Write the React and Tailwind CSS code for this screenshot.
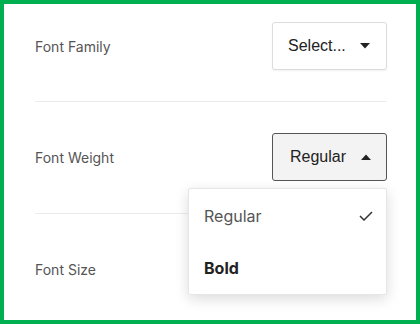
import { useState } from 'react';

const Caret = ({ up }) => (
  <svg width="10" height="6" viewBox="0 0 10 6" className="shrink-0">
    {up ? <path d="M0 6 L5 0.5 L10 6 Z" fill="#222" /> : <path d="M0 0 L5 5.5 L10 0 Z" fill="#222" />}
  </svg>
);

const Check = () => (
  <svg width="14" height="10" viewBox="0 0 14 10" fill="none">
    <path d="M1 5 L5 9 L13 1" stroke="#333" strokeWidth="1.5" />
  </svg>
);

const OPCOES = ['Regular', 'Bold'];

export default function App() {
  const [peso] = useState('Regular');

  return (
    <div className="w-[420px] h-[324px] overflow-hidden border-4 border-[#00b050] bg-white pl-[31px] pr-[29px] font-['Inter',sans-serif]">
      {/* Font Family */}
      <div className="flex items-center justify-between pt-[18px] pb-[31px] border-b border-[#ececec]">
        <span className="text-[14px] text-[#555]">Font Family</span>
        <button className="h-[48px] w-[115px] flex items-center justify-between pl-[15px] pr-[16px] bg-white border border-[#dcdcdc] rounded-[3px] shadow-[0_1px_2px_rgba(0,0,0,0.06)] text-[16px] text-[#222] font-['Liberation_Sans',Arial,sans-serif]">
          Select...
          <Caret />
        </button>
      </div>

      {/* Font Weight */}
      <div className="flex items-center justify-between pt-[31px] pb-[32px] border-b border-[#ececec]">
        <span className="text-[14px] text-[#555]">Font Weight</span>
        <div className="relative">
          <button className="h-[48px] w-[115px] flex items-center justify-between pl-[17px] pr-[15px] bg-[#f3f3f3] border-[1.5px] border-[#555] rounded-[3px] text-[16px] text-[#222] font-['Liberation_Sans',Arial,sans-serif]">
            {peso}
            <Caret up />
          </button>
          <div className="absolute right-0 top-[55px] w-[199px] z-10 bg-white border border-[#e6e6e6] rounded-[2px] shadow-[0_4px_14px_rgba(0,0,0,0.14)] pt-[1px]">
            {OPCOES.map((o) => (
              <div key={o} className="h-[52px] flex items-center justify-between pl-[15px] pr-[13px] text-[16px]">
                <span className={o === 'Bold' ? 'font-bold text-[#222]' : 'text-[#555]'}>{o}</span>
                {o === peso && <Check />}
              </div>
            ))}
          </div>
        </div>
      </div>

      {/* Font Size */}
      <div className="flex items-center justify-between pt-[31px] pb-[32px]">
        <span className="text-[14px] text-[#555] h-[48px] flex items-center">Font Size</span>
      </div>
    </div>
  );
}
